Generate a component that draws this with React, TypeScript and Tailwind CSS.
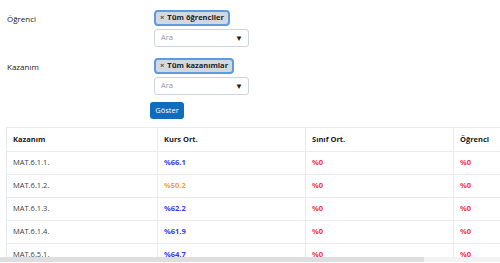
import React from 'react';

type Row = { code: string; kurs: string; kursColor: string; sinif: string; ogrenci: string };

const rows: Row[] = [
  { code: 'MAT.6.1.1.', kurs: '%66.1', kursColor: 'text-[#3a3af5]', sinif: '%0', ogrenci: '%0' },
  { code: 'MAT.6.1.2.', kurs: '%50.2', kursColor: 'text-[#f7a528]', sinif: '%0', ogrenci: '%0' },
  { code: 'MAT.6.1.3.', kurs: '%62.2', kursColor: 'text-[#3a3af5]', sinif: '%0', ogrenci: '%0' },
  { code: 'MAT.6.1.4.', kurs: '%61.9', kursColor: 'text-[#3a3af5]', sinif: '%0', ogrenci: '%0' },
  { code: 'MAT.6.5.1.', kurs: '%64.7', kursColor: 'text-[#3a3af5]', sinif: '%0', ogrenci: '%0' },
];

const FilterField: React.FC<{ label: string; tag: string }> = ({ label, tag }) => (
  <div className="flex">
    <div className="w-[154px] pl-[7px] pt-[3px] text-[8px] text-[#1d2125]">{label}</div>
    <div className="flex flex-col">
      <div className="flex h-[16px] w-fit items-center rounded-[4px] border-2 border-[#5b9be0] bg-[#d4d8dd] px-[4px] text-[7.5px] font-bold text-[#1d2125]">
        <span className="mr-[3px] text-[#4a4f55]">×</span>
        {tag}
      </div>
      <div className="mt-[3px] flex h-[18px] w-[95px] items-center justify-between rounded-[3px] border border-[#ced4da] bg-white pl-[6px] pr-[5px]">
        <span className="text-[7.5px] text-[#8f959e]">Ara</span>
        <span className="text-[8px] leading-none text-[#1d2125]">▼</span>
      </div>
    </div>
  </div>
);

export default function App() {
  return (
    <div className="relative h-[263px] w-[500px] overflow-hidden bg-white font-['Open_Sans','Noto_Sans',sans-serif]">
      <div className="pt-[10px]">
        <FilterField label="Öğrenci" tag="Tüm öğrenciler" />
        <div className="mt-[11px]">
          <FilterField label="Kazanım" tag="Tüm kazanımlar" />
        </div>
        <button className="ml-[150px] mt-[7px] flex h-[17px] w-[34px] items-center justify-center rounded-[3px] bg-[#0f6cbf] text-[7.5px] text-white">
          Göster
        </button>
      </div>

      {/* Tablo */}
      <div className="ml-[6px] mt-[8px] h-[130px] overflow-hidden">
        <table className="w-[620px] border-collapse border-t border-l border-[#e9ecef] text-left text-[7.5px] text-[#1d2125]">
          <thead>
            <tr className="h-[24px] border-b border-[#e9ecef]">
              <th className="w-[151px] border-r border-[#e9ecef] pl-[6px] font-bold">Kazanım</th>
              <th className="w-[148px] border-r border-[#e9ecef] pl-[6px] font-bold">Kurs Ort.</th>
              <th className="w-[148px] border-r border-[#e9ecef] pl-[6px] font-bold">Sınıf Ort.</th>
              <th className="pl-[6px] font-bold">Öğrenci</th>
            </tr>
          </thead>
          <tbody>
            {rows.map((r) => (
              <tr key={r.code} className="h-[23px] border-b border-[#e9ecef]">
                <td className="border-r border-[#e9ecef] pl-[6px] text-[#3b3f44]">{r.code}</td>
                <td className={`border-r border-[#e9ecef] pl-[6px] font-bold ${r.kursColor}`}>{r.kurs}</td>
                <td className="border-r border-[#e9ecef] pl-[6px] font-bold text-[#f5333f]">{r.sinif}</td>
                <td className="pl-[6px] font-bold text-[#f5333f]">{r.ogrenci}</td>
              </tr>
            ))}
          </tbody>
        </table>
      </div>

      {/* Yatay kaydırma çubuğu */}
      <div className="h-[5px] w-full bg-[#f3f3f3]">
        <div className="h-full w-[424px] bg-[#dedede]" />
      </div>
    </div>
  );
}
